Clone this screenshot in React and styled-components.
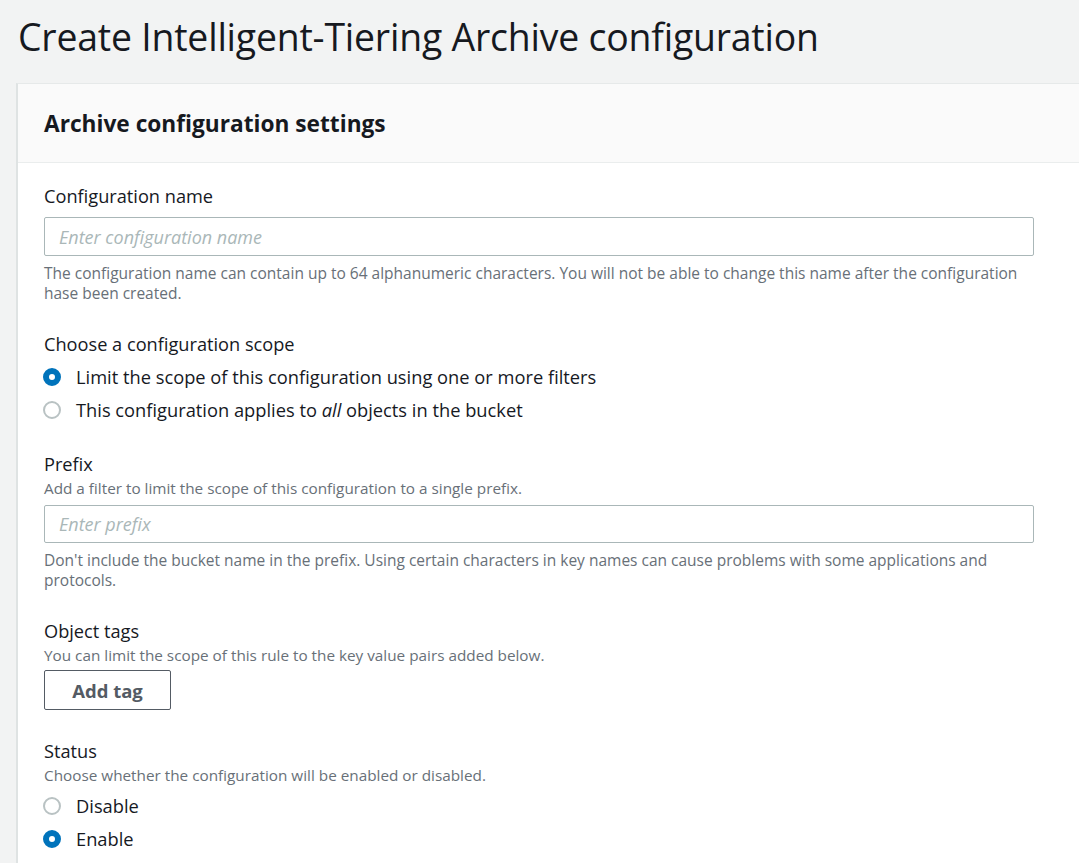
import React from "react";
import styled, { createGlobalStyle } from "styled-components";

const GlobalStyle = createGlobalStyle`
    html, body {
        margin: 0;
        padding: 0;
        background: #f2f3f3;
        font-family: "Open Sans", "Noto Sans", sans-serif;
        color: #16191f;
    }
`;

function Radio({ checked, children }) {
    return (
        <S.RadioRow>
            <S.RadioDot $checked={checked} />
            <S.RadioLabel>{children}</S.RadioLabel>
        </S.RadioRow>
    );
}

function App() {
    return (
        <S.Page>
            <GlobalStyle />
            <S.PageTitle>Create Intelligent-Tiering Archive configuration</S.PageTitle>
            <S.Card>
                <S.CardHeader>
                    <S.CardTitle>Archive configuration settings</S.CardTitle>
                </S.CardHeader>
                <S.CardBody>
                    <S.Field>
                        <S.Label>Configuration name</S.Label>
                        <S.Input placeholder="Enter configuration name" />
                        <S.Hint>
                            The configuration name can contain up to 64 alphanumeric characters. You will not be able to change this name after the configuration hase been created.
                        </S.Hint>
                    </S.Field>

                    <S.Field>
                        <S.Label>Choose a configuration scope</S.Label>
                        <S.RadioGroup>
                            <Radio checked>Limit the scope of this configuration using one or more filters</Radio>
                            <Radio>This configuration applies to <i>all</i> objects in the bucket</Radio>
                        </S.RadioGroup>
                    </S.Field>

                    <S.Field>
                        <S.Label>Prefix</S.Label>
                        <S.Description>Add a filter to limit the scope of this configuration to a single prefix.</S.Description>
                        <S.Input placeholder="Enter prefix" />
                        <S.Hint>
                            Don't include the bucket name in the prefix. Using certain characters in key names can cause problems with some applications and protocols.
                        </S.Hint>
                    </S.Field>

                    <S.Field>
                        <S.Label>Object tags</S.Label>
                        <S.Description>You can limit the scope of this rule to the key value pairs added below.</S.Description>
                        <S.Button>Add tag</S.Button>
                    </S.Field>

                    <S.Field>
                        <S.Label>Status</S.Label>
                        <S.Description>Choose whether the configuration will be enabled or disabled.</S.Description>
                        <S.RadioGroup>
                            <Radio>Disable</Radio>
                            <Radio checked>Enable</Radio>
                        </S.RadioGroup>
                    </S.Field>
                </S.CardBody>
            </S.Card>
        </S.Page>
    );
}

export default App;

const Page = styled.div`
    padding: 14px 0 0 16px;
    min-height: 100vh;
    box-sizing: border-box;
`;

const PageTitle = styled.h1`
    margin: 0 0 23px 2px;
    font-size: 37.4px;
    font-weight: 400;
    line-height: 46px;
    letter-spacing: -0.2px;
    color: #16191f;
    white-space: nowrap;
`;

const Card = styled.section`
    background: #ffffff;
    border-left: 2px solid #dfe3e3;
    border-top: 1px solid #e6e9e9;
    min-height: 800px;
`;

const CardHeader = styled.div`
    background: #fafafa;
    border-bottom: 1px solid #eaeded;
    padding: 0 26px;
    height: 78px;
    display: flex;
    align-items: center;
`;

const CardTitle = styled.h2`
    margin: 0;
    font-size: 22.7px;
    font-weight: 700;
    color: #16191f;
`;

const CardBody = styled.div`
    padding: 21px 45px 0 26px;
    display: flex;
    flex-direction: column;
    gap: 29px;
`;

const Field = styled.div`
    display: flex;
    flex-direction: column;
`;

const Label = styled.div`
    font-size: 18.2px;
    line-height: 24px;
    color: #16191f;
`;

const Description = styled.div`
    font-size: 15.3px;
    line-height: 20px;
    color: #687078;
    margin-top: 2px;
`;

const Hint = styled.div`
    font-size: 15.5px;
    line-height: 20px;
    color: #687078;
    margin-top: 7px;
`;

const Input = styled.input`
    margin-top: 9px;
    height: 39px;
    box-sizing: border-box;
    border: 1px solid #aab7b8;
    border-radius: 2px;
    padding: 0 14px;
    font-family: inherit;
    font-size: 18px;
    background: #fff;
    &::placeholder {
        color: #aab7b8;
        font-style: italic;
    }
    ${Description} + & {
        margin-top: 7px;
        height: 38px;
    }
`;

const RadioGroup = styled.div`
    display: flex;
    flex-direction: column;
    gap: 6px;
    margin-top: 7px;
`;

const RadioRow = styled.label`
    display: flex;
    align-items: center;
    gap: 15px;
    margin-left: -1px;
`;

const RadioDot = styled.span`
    width: 18px;
    height: 18px;
    border-radius: 50%;
    box-sizing: border-box;
    flex-shrink: 0;
    background: #fff;
    border: ${({ $checked }) => ($checked ? "6px solid #0073bb" : "2px solid #b9c2c3")};
`;

const RadioLabel = styled.span`
    font-size: 18.3px;
    line-height: 27px;
    color: #16191f;
`;

const Button = styled.button`
    align-self: flex-start;
    margin-top: 5px;
    width: 127px;
    height: 40px;
    border: 1px solid #545b64;
    border-radius: 2px;
    background: #fff;
    color: #545b64;
    font-family: inherit;
    font-size: 18.5px;
    font-weight: 700;
`;

const S = {
    Page,
    PageTitle,
    Card,
    CardHeader,
    CardTitle,
    CardBody,
    Field,
    Label,
    Description,
    Hint,
    Input,
    RadioGroup,
    RadioRow,
    RadioDot,
    RadioLabel,
    Button,
};
